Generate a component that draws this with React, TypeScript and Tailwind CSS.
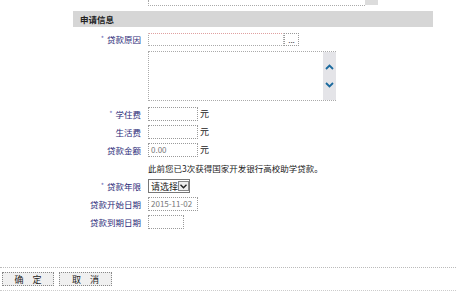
import React from "react";

const font = { fontFamily: '"Noto Sans CJK SC", "Liberation Sans", sans-serif' };

const Label = ({ text, required }: { text: string; required?: boolean }) => (
  <div className="w-[142px] shrink-0 pr-[1px] text-right text-[8.5px] leading-none text-[#2a2a78]">
    {required && <span className="mr-[3px] text-[7px] align-top text-[#6b6bb5]">*</span>}
    {text}
  </div>
);

const Box = ({ w, value }: { w: string; value?: string }) => (
  <div className={`${w} h-[14px] border border-dotted border-[#9a9a9a] bg-white px-[2px] text-[8px] leading-[12px] text-[#777]`}>
    {value}
  </div>
);

const Yuan = () => <span className="-ml-[4px] text-[9px] text-[#222]">元</span>;

const Btn = ({ a, b, w }: { a: string; b: string; w: string }) => (
  <button className={`${w} flex h-[14px] items-center justify-center gap-[9px] border border-dotted border-[#888] bg-[#f0f0f0] text-[9px] leading-none text-[#222]`}>
    <span>{a}</span>
    <span>{b}</span>
  </button>
);

const App: React.FC = () => {
  return (
    <div className="relative h-[292px] w-[456px] overflow-hidden bg-white" style={font}>
      {/* piece of the box above */}
      <div className="flex h-[6px]">
        <div className="ml-[148px] w-[217px] border-b border-l border-dotted border-[#aaa]" />
        <div className="h-[5px] w-[13px] bg-[#dcdcdc]" />
      </div>

      <div className="ml-[73px] mt-[5px] flex h-[16px] w-[360px] items-center bg-[#d6d6d6] pl-[7px] text-[8.5px] font-bold text-[#222]">
        申请信息
      </div>

      <div className="mt-[6px] flex items-center gap-[6px]">
        <Label text="贷款原因" required />
        <div className="flex">
          <div className="h-[13px] w-[136px] border border-dotted border-[#aaa] border-t-[#e0a0a0]" />
          <div className="flex h-[13px] w-[15px] items-center justify-center border border-dotted border-[#999] text-[8px] leading-none text-[#333]">
            ...
          </div>
        </div>
      </div>

      <div className="ml-[148px] mt-[5px] flex h-[50px] w-[188px] border-l border-t border-b border-dotted border-[#aaa]">
        <div className="flex-1" />
        <div className="flex w-[13px] flex-col items-center justify-around bg-[#e4e4e8] py-[6px]">
          <svg width="9" height="6" viewBox="0 0 9 6">
            <path d="M1 5 L4.5 1.5 L8 5" fill="none" stroke="#1b6a9e" strokeWidth="1.8" />
          </svg>
          <svg width="9" height="6" viewBox="0 0 9 6">
            <path d="M1 1 L4.5 4.5 L8 1" fill="none" stroke="#1b6a9e" strokeWidth="1.8" />
          </svg>
        </div>
      </div>

      <div className="mt-[6px] flex flex-col gap-[4px]">
        <div className="flex items-center gap-[6px]">
          <Label text="学住费" required />
          <Box w="w-[50px]" />
          <Yuan />
        </div>
        <div className="flex items-center gap-[6px]">
          <Label text="生活费" />
          <Box w="w-[50px]" />
          <Yuan />
        </div>
        <div className="flex items-center gap-[6px]">
          <Label text="贷款金额" />
          <Box w="w-[50px]" value="0.00" />
          <Yuan />
        </div>
        <div className="flex h-[14px] items-center pl-[148px] text-[8.5px] text-[#222]">
          此前您已3次获得国家开发银行高校助学贷款。
        </div>
        <div className="flex items-center gap-[6px]">
          <Label text="贷款年限" required />
          <div className="flex h-[14px] w-[42px] items-center justify-between border border-[#777] pl-[2px] text-[9px] leading-none text-[#222]">
            请选择
            <div className="flex h-[10px] w-[11px] items-center justify-center border border-[#888] bg-[#eee]">
              <svg width="7" height="5" viewBox="0 0 7 5">
                <path d="M0.5 0.8 L3.5 3.8 L6.5 0.8" fill="none" stroke="#222" strokeWidth="1.4" />
              </svg>
            </div>
          </div>
        </div>
        <div className="flex items-center gap-[6px]">
          <Label text="贷款开始日期" />
          <Box w="w-[50px]" value="2015-11-02" />
        </div>
        <div className="flex items-center gap-[6px]">
          <Label text="贷款到期日期" />
          <Box w="w-[36px]" />
        </div>
      </div>

      <div className="absolute left-0 right-0 top-[267px] border-t border-dotted border-[#bbb]" />
      <div className="absolute left-[2px] top-[272px] flex gap-[5px]">
        <Btn a="确" b="定" w="w-[52px]" />
        <Btn a="取" b="消" w="w-[53px]" />
      </div>
      <div className="absolute left-0 right-0 top-[290px] border-t border-dotted border-[#ccc]" />
    </div>
  );
};

export default App;
